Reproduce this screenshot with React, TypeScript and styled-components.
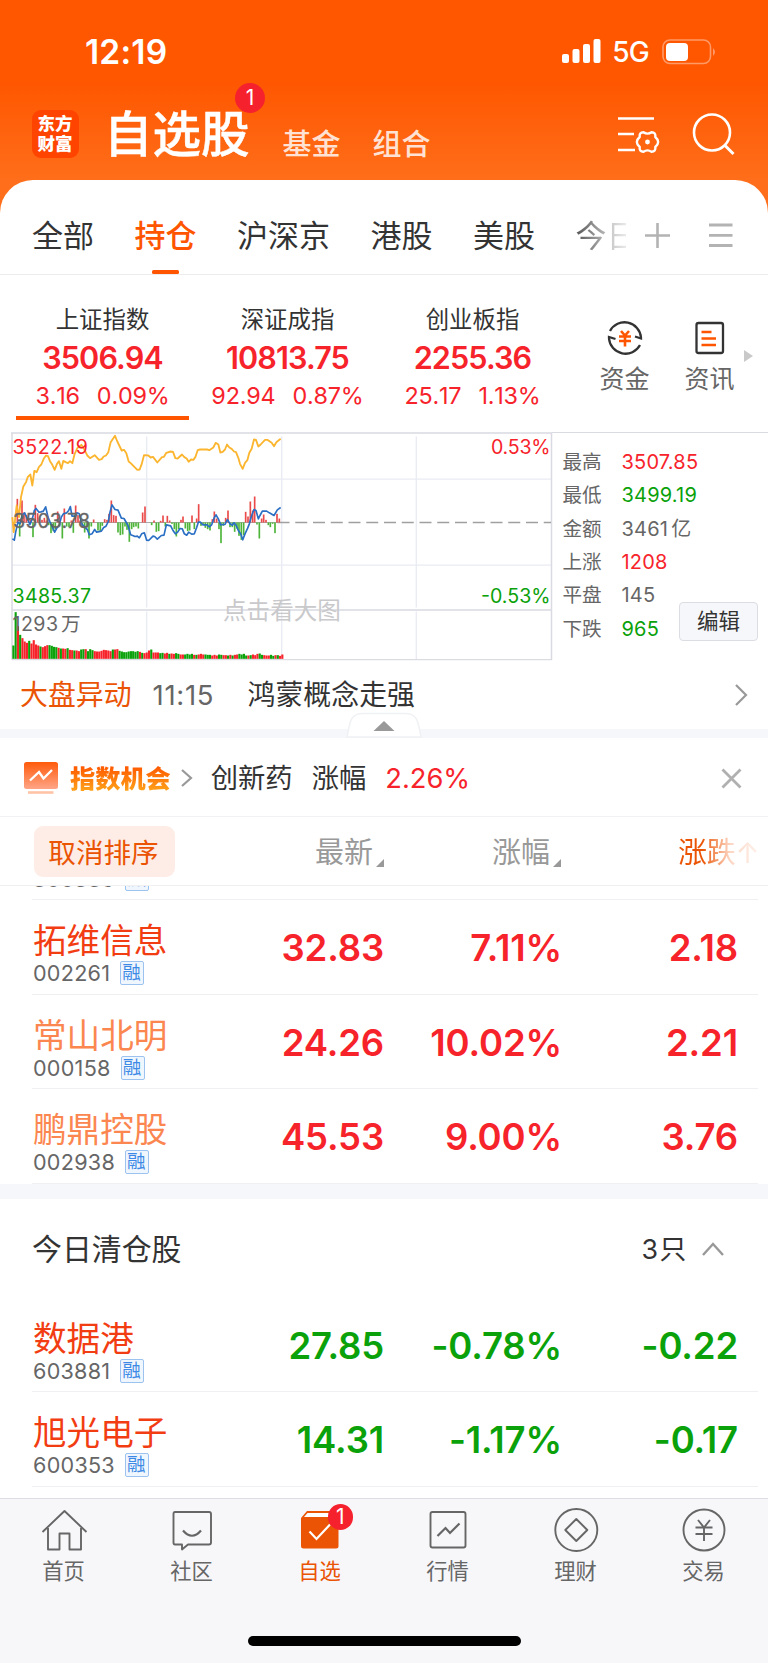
import React from "react";
import styled, { createGlobalStyle, css } from "styled-components";

const RED = "#f7232b";
const GREEN = "#0aa10a";
const ORANGE = "#ff5500";
const DEEP_ORANGE = "#ea5404";

const GlobalStyle = createGlobalStyle`
  * { box-sizing: border-box; }
  body {
    margin: 0;
    background: #fff;
    font-family: Inter, "Noto Sans CJK SC", sans-serif;
    color: #333;
  }
  svg { display: block; flex: none; overflow: visible; }
`;

const Screen = styled.div`
  width: 768px;
  height: 1663px;
  overflow: hidden;
  display: flex;
  flex-direction: column;
  background: linear-gradient(#ff5600 0, #ff5600 80px, #ff6e1a 180px, #ff6e1a 240px);
`;

/* ---------- status bar ---------- */
const StatusBar = styled.div`
  height: 86px;
  flex: none;
  display: flex;
  align-items: center;
  padding: 17px 51px 0 85px;
  color: #fff;
`;
const Clock = styled.div`
  flex: 1;
  font-size: 33.5px;
  font-weight: 600;
  line-height: 40px;
  letter-spacing: 0.2px;
`;
const Network = styled.div`
  font-size: 28px;
  font-weight: 500;
  line-height: 40px;
  letter-spacing: -0.8px;
  margin: 1px 13px 0 11px;
`;

/* ---------- header ---------- */
const Header = styled.div`
  height: 93.5px;
  flex: none;
  display: flex;
  padding-left: 32px;
  color: #fff;
`;
const Logo = styled.div`
  width: 47px;
  height: 48px;
  margin-top: 24px;
  border-radius: 9px;
  background: #ff4400;
  padding: 4px 0 0 5.5px;
  font-size: 17.5px;
  line-height: 19.5px;
  font-weight: 900;
`;
const Title = styled.div`
  position: relative;
  width: 146px;
  margin: 14px 0 0 25px;
  font-size: 48.5px;
  line-height: 70px;
  font-weight: 500;
  -webkit-text-stroke: 0.5px #fff;
`;
const Bubble = styled.span<{ $size: number; $x: number; $y: number }>`
  position: absolute;
  left: ${(p) => p.$x}px;
  top: ${(p) => p.$y}px;
  width: ${(p) => p.$size}px;
  height: ${(p) => p.$size}px;
  border-radius: 50%;
  background: #f5222d;
  color: #fff;
  font-size: 21px;
  line-height: ${(p) => p.$size}px;
  font-weight: 400;
  text-align: center;
  -webkit-text-stroke: 0;
`;
const HeaderLink = styled.div<{ $gap: number }>`
  margin: 38.5px 0 0 ${(p) => p.$gap}px;
  font-size: 29px;
  line-height: 40px;
  color: #ffe2d3;
  font-weight: 500;
`;
const HeaderIcons = styled.div`
  margin-left: auto;
  padding: 24px 33px 0 0;
  display: flex;
  gap: 33px;
`;

/* ---------- sheet ---------- */
const Sheet = styled.div`
  flex: 1;
  display: flex;
  flex-direction: column;
  background: #fff;
  border-radius: 33px 33px 0 0;
`;
const Tabs = styled.div`
  height: 95.5px;
  flex: none;
  display: flex;
  border-bottom: 1px solid #ececee;
`;
const TabList = styled.div`
  width: 626px;
  overflow: hidden;
  display: flex;
  gap: 40.5px;
  padding-left: 32px;
`;
const Tab = styled.div<{ $active?: boolean; $fade?: boolean }>`
  position: relative;
  flex: none;
  padding-top: 35px;
  font-size: 31px;
  line-height: 42px;
  white-space: nowrap;
  ${(p) =>
    p.$active &&
    css`
      color: ${ORANGE};
      font-weight: 500;
      &::after {
        content: "";
        position: absolute;
        left: 17.5px;
        bottom: 0;
        width: 27px;
        height: 4px;
        border-radius: 1.5px;
        background: ${ORANGE};
      }
    `}
  ${(p) =>
    p.$fade &&
    css`
      color: transparent;
      background: linear-gradient(90deg, #555 0, #ccc 36px, #fff 60px);
      background-clip: text;
    `}
`;
const TabTools = styled.div`
  display: flex;
  gap: 39px;
  padding: 43px 0 0 19px;
`;

/* ---------- indices ---------- */
const Indices = styled.div`
  height: 157px;
  flex: none;
  display: flex;
  padding-left: 10px;
`;
const IndexCell = styled.div<{ $active?: boolean }>`
  width: 185px;
  height: 145px;
  padding-top: 27.5px;
  text-align: center;
  color: ${RED};
  background: ${(p) =>
    p.$active ? `linear-gradient(${ORANGE}, ${ORANGE}) 6px 100% / 173px 4.5px no-repeat` : "none"};
`;
const IndexName = styled.div`
  font-size: 23.4px;
  line-height: 34px;
  color: #333;
`;
const IndexValue = styled.div`
  font-size: 30.6px;
  line-height: 42px;
  font-weight: 600;
  letter-spacing: -0.9px;
`;
const IndexChange = styled.div`
  display: flex;
  justify-content: center;
  gap: 17px;
  font-size: 23.4px;
  line-height: 34px;
  font-kerning: none;
  letter-spacing: -0.2px;
`;
const Shortcuts = styled.div`
  display: flex;
  padding: 43.5px 0 0 17px;
`;
const Shortcut = styled.div`
  width: 85px;
  display: flex;
  flex-direction: column;
  align-items: center;
  font-size: 25px;
  line-height: 36px;
  color: #666;
  gap: 4px;
`;
const MoreArrow = styled.div`
  margin: 31px 0 0 -8px;
  height: 12px;
  border-left: 9px solid #c9c9c9;
  border-top: 6px solid transparent;
  border-bottom: 6px solid transparent;
`;

/* ---------- chart ---------- */
const ChartPanel = styled.div`
  height: 229px;
  flex: none;
  display: flex;
  padding-left: 11px;
`;
const Stats = styled.div`
  position: relative;
  flex: 1;
  padding: 12.8px 0 0 10.5px;
  border-top: 1.5px solid #d9dae2;
`;
const Stat = styled.div<{ $color: string }>`
  display: grid;
  grid-template-columns: 59px 1fr;
  font-size: 19.6px;
  line-height: 33.4px;
  color: #666;
  b {
    font-weight: 400;
    color: ${(p) => p.$color};
    font-size: 20px;
    letter-spacing: 0.2px;
  }
  i {
    font-style: normal;
    margin-left: 3px;
  }
`;
const EditButton = styled.div`
  position: absolute;
  right: 10px;
  bottom: 20.5px;
  width: 79px;
  height: 39px;
  border: 1px solid #dcdde3;
  border-radius: 4px;
  background: #f6f7fa;
  text-align: center;
  font-size: 21.5px;
  line-height: 36px;
`;

/* ---------- news and promo ---------- */
const News = styled.div`
  height: 68px;
  flex: none;
  display: flex;
  align-items: center;
  padding: 0 21px 1px 20px;
  font-size: 27.9px;
  line-height: 40px;
  span:nth-child(1) { color: ${DEEP_ORANGE}; }
  span:nth-child(2) { color: #666; margin: 0 32px 0 21px; font-size: 27.5px; width: 63px; letter-spacing: 0.7px; }
  svg { margin-left: auto; }
`;
const Divider = styled.div<{ $h: number }>`
  position: relative;
  height: ${(p) => p.$h}px;
  flex: none;
  background: #f6f7fa;
`;
const Collapse = styled.div`
  position: absolute;
  left: 346px;
  top: -17px;
`;
const Promo = styled.div`
  height: 79px;
  flex: none;
  display: flex;
  align-items: center;
  padding: 2px 27.5px 0 24px;
  border-bottom: 1.5px solid #f1f1f4;
  font-size: 27.3px;
  line-height: 40px;
`;
const PromoTitle = styled.div`
  margin: 1px 10px 0 12px;
  font-size: 25.2px;
  font-weight: 900;
  color: transparent;
  background: linear-gradient(#ff5a00 20%, #ffa21a 80%);
  background-clip: text;
`;
const PromoName = styled.div`
  margin: 2px 0 0 19px;
`;
const PromoRate = styled.div`
  margin: 2px auto 0 19px;
  color: ${RED};
`;

/* ---------- table ---------- */
const SortBar = styled.div`
  height: 69px;
  flex: none;
  display: grid;
  grid-template-columns: 175px 209px 177px 1fr;
  align-items: center;
  border-bottom: 1.5px solid #f0f0f3;
  font-size: 29px;
  line-height: 40px;
  color: #999;
`;
const CancelSort = styled.div`
  margin-left: 34px;
  width: 141px;
  height: 51px;
  border-radius: 9px;
  background: #fdede6;
  color: ${DEEP_ORANGE};
  font-size: 27.6px;
  line-height: 54px;
  padding-right: 2px;
  text-align: center;
`;
const SortKey = styled.div`
  display: flex;
  justify-content: flex-end;
  align-items: flex-end;
  gap: 3px;
  padding-top: 3px;
  svg { margin-bottom: 6px; }
`;
const ActiveSortKey = styled.div`
  margin: 3px 0 0 117px;
  color: transparent;
  background: linear-gradient(90deg, #ea5404 24px, #fdd6c3 52px, #fef0e9 80px);
  background-clip: text;
  white-space: nowrap;
  letter-spacing: -0.3px;
`;
const Row = styled.div`
  height: 94.5px;
  flex: none;
  margin: 0 10px 0 32px;
  padding-top: 9px;
  border-bottom: 1.5px solid #f0f0f2;
  display: grid;
  grid-template-columns: 160px 192px 178px 176px;
`;
const ClippedRow = styled.div`
  height: 14px;
  flex: none;
  overflow: hidden;
  display: flex;
  flex-direction: column;
  justify-content: flex-end;
`;
const StockName = styled.div<{ $color: string }>`
  margin-top: 9px;
  padding-left: 1px;
  height: 46px;
  font-size: 33.6px;
  line-height: 46px;
  color: ${(p) => p.$color};
  white-space: nowrap;
`;
const StockCode = styled.div`
  display: flex;
  align-items: center;
  gap: 10px;
  margin-top: -4px;
  padding-left: 1px;
  font-size: 21.6px;
  line-height: 26px;
  letter-spacing: 0.25px;
  font-kerning: none;
  color: #666;
`;
const MarginTag = styled.span`
  width: 24px;
  height: 24px;
  border: 1.5px solid #9cc3f0;
  border-radius: 2px;
  background: #f0f6fd;
  color: #3d8ae6;
  font-size: 18.5px;
  line-height: 21px;
  text-indent: 1px;
  letter-spacing: 0;
`;
const Num = styled.div<{ $down?: boolean }>`
  text-align: right;
  font-size: 36.5px;
  line-height: 46px;
  padding-top: 16px;
  font-weight: 600;
  letter-spacing: -0.15px;
  color: ${(p) => (p.$down ? GREEN : RED)};
`;
const SectionHead = styled.div`
  height: 99px;
  flex: none;
  display: flex;
  align-items: center;
  padding: 2px 44px 0 32px;
  font-size: 29.9px;
  line-height: 44px;
`;
const Count = styled.div`
  margin: 0 14px 0 auto;
  font-size: 26.8px;
  letter-spacing: 1.6px;
`;

/* ---------- bottom bar ---------- */
const BottomBar = styled.div`
  height: 165px;
  flex: none;
  display: flex;
  flex-direction: column;
  align-items: center;
  margin-top: auto;
  border-top: 1px solid #dedee4;
  background: #f7f7fa;
`;
const BottomTabs = styled.div`
  display: flex;
  width: 100%;
  height: 137px;
`;
const BottomTab = styled.div<{ $active?: boolean }>`
  width: 128px;
  padding: 7px 1px 0 0;
  display: flex;
  flex-direction: column;
  align-items: center;
  font-size: 21.3px;
  line-height: 34px;
  color: ${(p) => (p.$active ? DEEP_ORANGE : "#666")};
`;
const TabIcon = styled.div`
  position: relative;
  width: 48px;
  height: 48px;
`;
const HomeIndicator = styled.div`
  width: 273px;
  height: 10px;
  border-radius: 5px;
  background: #000;
`;

/* ---------- chart data, in thirds of a pixel ---------- */
const AVERAGE =
  "37,275 41,320 50,240 57,275 63,215 70,183 78,170 83,155 91,147 97,180 103,136 110,140 117,124 124,117 131,100 138,90 144,92 150,107 157,118 164,133 171,115 177,107 184,130 190,106 197,110 204,113 210,107 217,113 224,85 232,68 244,58 252,70 262,90 270,98 284,89 297,103 305,101 311,93 318,90 325,80 332,50 345,31 352,48 365,75 372,73 379,83 386,108 392,113 412,133 419,132 425,116 432,89 445,90 452,96 459,94 472,111 486,95 492,94 499,82 512,78 519,79 526,98 533,99 546,87 553,95 560,99 566,109 573,102 580,103 586,95 593,74 600,72 621,72 628,74 640,66 647,52 655,57 661,81 668,79 675,72 681,57 688,66 695,70 702,78 708,80 715,97 720,115 728,130 735,112 742,104 748,82 755,70 762,42 768,43 775,63 782,57 795,43 802,43 815,52 822,62 829,50 842,40";
const PRICE =
  "37,340 43,344 47,320 54,290 60,295 66,270 74,262 82,280 90,297 97,280 103,255 108,249 117,260 123,259 130,257 137,244 144,275 150,290 157,305 164,320 171,307 177,300 184,275 190,265 200,262 206,255 211,243 216,272 224,272 231,262 238,265 245,295 254,305 262,312 268,328 276,325 284,312 290,320 304,317 311,306 318,302 325,288 330,260 336,238 345,252 354,254 364,278 372,279 384,300 392,328 398,330 405,333 412,332 418,337 425,325 433,322 440,344 446,345 459,332 464,333 472,341 484,330 492,329 499,298 512,301 519,315 526,325 533,320 540,309 547,310 553,325 560,329 566,320 575,326 583,325 590,306 595,290 601,290 609,298 621,298 628,304 635,298 642,278 648,268 655,280 662,298 668,297 675,297 682,282 690,295 697,299 702,292 708,299 715,315 722,325 728,343 735,325 743,308 748,295 755,270 762,252 768,255 775,280 780,270 787,257 800,257 808,262 822,270 832,253 842,246";
const MOMENTUM: [number, number][] = [
  [52, -71], [59, 42], [66, -66], [72, -30], [79, -22], [86, -14], [92, -8], [99, 44], [106, -53], [113, -28],
  [119, -15], [126, -8], [133, -14], [139, -6], [146, 8], [153, 32], [160, 26], [166, 20], [173, -33], [180, -12],
  [187, 48], [193, -42], [200, 12], [207, 14], [214, -6], [220, 31], [227, -51], [234, -22], [240, -6], [247, 14],
  [254, 30], [261, 14], [267, 48], [274, 12], [281, -9], [294, 24], [301, 26], [307, 10], [314, -10], [321, -8],
  [327, -26], [334, -66], [341, -22], [348, -20], [354, 30], [361, 38], [368, 36], [375, 12], [381, 22], [388, 58],
  [395, 20], [401, 14], [408, 12], [415, 18], [428, -30], [435, -48], [455, 8], [462, -6], [469, 28], [476, 26],
  [482, -5], [489, -21], [496, 12], [502, -20], [509, -6], [516, 4], [523, 20], [529, 42], [536, 20], [543, -8],
  [549, -18], [556, 18], [563, 26], [569, 24], [576, -21], [583, 20], [590, -12], [596, -55], [603, 10], [610, 4],
  [616, 16], [623, 20], [630, 24], [637, -10], [643, -33], [650, -12], [657, 20], [663, 62], [670, 10], [677, -14],
  [684, -36], [690, 14], [697, 14], [704, 28], [711, 18], [717, 40], [724, 52], [731, 38], [737, -32], [744, -18],
  [751, -63], [758, -36], [764, -78], [771, 6], [778, 48], [785, -12], [791, -24], [798, -8], [805, 8], [811, 14],
  [818, 4], [825, 32], [831, -26], [838, -12],
];
const VOLUME =
  "40g 140g 98r 72g 62r 52r 48r 54g 46r 56r 43r 40r 37g 35r 38r 41r 41g 39g 36g 35g 33r 31g 31r 30r 32g 27r 26r 25g 25r 23r 28g 29g 29r 23g 29g 26g 23r 22r 22r 24r 27r 26r 25r 23r 28g 28r 29r 24g 22g 20g 20g 22g 23g 23g 21g 23g 21r 18g 17r 19r 25r 28g 19r 19r 19r 17g 18g 16r 18r 15g 16r 15r 17g 15g 13r 13r 13g 15g 13g 15g 12r 12g 13r 15r 13r 13g 12g 12g 10r 12r 10r 13g 12g 11r 11r 10g 12r 10g 12r 13r 15g 13g 15g 10g 10r 11g 13r 11r 15r 16g 12g 11r 10r 10r 12g 9g 11r 11g 9r 13r"
    .split(" ")
    .map((s) => ({ h: parseInt(s, 10), up: s.endsWith("r") }));

function Chart() {
  return (
    <svg width="541" height="229" viewBox="11 6.5 541 229" fill="none" fontSize="19.6">
      <g stroke="#e9ebf3" strokeWidth="1.3">
        <path d="M146.7 11V182M146.7 186V234M281.7 11V182M281.7 186V234M416.3 11V182M416.3 186V234M12 53.7H551.5M12 139.7H551.5" />
      </g>
      <path d="M11 7.6H552M12 7V234.2M551.5 7V234.2M12 184.4H551.5" stroke="#d9dae2" strokeWidth="1.5" />
      <path d="M12 234.2H552" stroke="#d3d4dc" />
      <path d="M12 97H281" stroke="#aaa" strokeWidth="1" />
      <path d="M277.5 97H551" stroke="#a0a0a0" strokeWidth="1.6" strokeDasharray="12 5.75" />
      <g transform="scale(0.33333)">
        {MOMENTUM.map(([x, h]) => (
          <rect key={x} x={x - 2.5} y={h < 0 ? 291 + h : 291} width="5" height={Math.abs(h)} fill={h < 0 ? "#ea4a4a" : "#4eb53a"} />
        ))}
        {VOLUME.map((v, i) => (
          <rect key={i} x={37 + i * 6.78} y={700 - v.h} width="6.4" height={v.h} fill={v.up ? "#f7232b" : "#0aa10a"} />
        ))}
        <polyline points={AVERAGE} stroke="#fbb52e" strokeWidth="5.5" strokeLinejoin="round" />
        <polyline points={PRICE} stroke="#2a6fc4" strokeWidth="5" strokeLinejoin="round" />
      </g>
      <text x="12.5" y="28" fill={RED} textLength="75.5">3522.19</text>
      <text x="13" y="102.5" fill="#666" textLength="77" stroke="#666" strokeWidth="0.3">3503.78</text>
      <text x="12.5" y="177.2" fill={GREEN} textLength="78.5">3485.37</text>
      <text x="12.5" y="205.5" fill="#666" textLength="45.5">1293</text>
      <text x="61" y="205.5" fill="#666">万</text>
      <text x="491" y="28" fill={RED} textLength="59.5">0.53%</text>
      <text x="481" y="177.2" fill={GREEN} textLength="69.5">-0.53%</text>
      <text x="223" y="193" fill="#c9c9cc" fontSize="23.6">点击看大图</text>
    </svg>
  );
}

function Chevron({ w, h, sw = 2.2, color = "#999" }: { w: number; h: number; sw?: number; color?: string }) {
  return (
    <svg width={w} height={h} fill="none" stroke={color} strokeWidth={sw}>
      <path d={`M1 1L${w - 1} ${h / 2}L1 ${h - 1}`} />
    </svg>
  );
}

const indices = [
  ["上证指数", "3506.94", "3.16", "0.09%"],
  ["深证成指", "10813.75", "92.94", "0.87%"],
  ["创业板指", "2255.36", "25.17", "1.13%"],
];
const stats = [
  { label: "最高", value: "3507.85", color: RED },
  { label: "最低", value: "3499.19", color: GREEN },
  { label: "金额", value: "3461", unit: "亿", color: "#666" },
  { label: "上涨", value: "1208", color: RED },
  { label: "平盘", value: "145", color: "#666" },
  { label: "下跌", value: "965", color: GREEN },
];

function Stock({ name, code, nums, color = "#f23c12", down }: { name?: string; code: string; nums: string[]; color?: string; down?: boolean }) {
  return (
    <Row>
      <div>
        <StockName $color={color}>{name}</StockName>
        <StockCode>
          {code}
          <MarginTag>融</MarginTag>
        </StockCode>
      </div>
      {nums.map((n, i) => (
        <Num key={i} $down={down}>{n}</Num>
      ))}
    </Row>
  );
}

const SortMark = () => (
  <svg width="8" height="8" fill="#999"><path d="M8 0V8H0Z" /></svg>
);

export default function App() {
  return (
    <>
      <GlobalStyle />
      <Screen>
        <StatusBar>
          <Clock>12:19</Clock>
          <svg width="39" height="25" fill="#fff">
            <rect x="0" y="15" width="7" height="9" rx="2" />
            <rect x="10.5" y="10" width="7" height="14" rx="2" />
            <rect x="21" y="5" width="7" height="19" rx="2" />
            <rect x="31.5" y="0" width="7" height="24" rx="2" />
          </svg>
          <Network>5G</Network>
          <svg width="55" height="26" fill="none">
            <rect x="1" y="1" width="47.5" height="23.5" rx="7" stroke="#ff9a66" strokeWidth="1.6" />
            <rect x="4" y="4" width="22" height="18" rx="4" fill="#fff" />
            <path d="M51 9Q55 13 51 17Z" fill="#ff9a66" />
          </svg>
        </StatusBar>

        <Header>
          <Logo>东方<br />财富</Logo>
          <Title>
            自选股
            <Bubble $size={30} $x={131} $y={-17}>1</Bubble>
          </Title>
          <HeaderLink $gap={32.5}>基金</HeaderLink>
          <HeaderLink $gap={32}>组合</HeaderLink>
          <HeaderIcons>
            <svg width="42" height="44" fill="none" stroke="#fff" strokeWidth="2.6">
              <path d="M0 8.5H36M0 24H16M0 40H17" />
              <path
                d="M25.5 22.2Q29.5 25 33.5 22.2Q38 22.2 37.3 27Q43 32 37.3 37Q38 41.8 33.5 41.8Q29.5 39 25.5 41.8Q21 41.8 21.7 37Q16 32 21.7 27Q21 22.2 25.5 22.2Z"
                strokeWidth="2.4"
                strokeLinejoin="round"
              />
              <circle cx="29.5" cy="32" r="2.4" fill="#fff" stroke="none" />
            </svg>
            <svg width="42" height="44" fill="none" stroke="#fff" strokeWidth="2.6">
              <circle cx="19" cy="22.5" r="18" />
              <path d="M31.5 35L40.5 44" strokeWidth="3" />
            </svg>
          </HeaderIcons>
        </Header>

        <Sheet>
          <Tabs>
            <TabList>
              <Tab>全部</Tab>
              <Tab $active>持仓</Tab>
              <Tab>沪深京</Tab>
              <Tab>港股</Tab>
              <Tab>美股</Tab>
              <Tab $fade>今日</Tab>
            </TabList>
            <TabTools>
              <svg width="25" height="25" stroke="#b3b3b3" strokeWidth="2.6">
                <path d="M12.5 0V25M0 12.5H25" />
              </svg>
              <svg width="24" height="25" stroke="#b3b3b3" strokeWidth="2.8">
                <path d="M0 2H23.5M0 12.3H23.5M0 22.5H23.5" />
              </svg>
            </TabTools>
          </Tabs>

          <Indices>
            {indices.map(([name, value, change, rate], i) => (
              <IndexCell key={name} $active={i === 0}>
                <IndexName>{name}</IndexName>
                <IndexValue>{value}</IndexValue>
                <IndexChange><span>{change}</span><span>{rate}</span></IndexChange>
              </IndexCell>
            ))}
            <Shortcuts>
              <Shortcut>
                <svg width="38" height="38" fill="none" stroke="#333" strokeWidth="2.3">
                  <path d="M4 12A16.5 16.5 0 0 1 35 18.5V19.5L29 17.5M34 26A16.5 16.5 0 0 1 3 19.5V18L9.5 20" />
                  <path d="M15 12L19 16.5L23 12M13 17.5H25M13 22H25M19 16.5V27.5" stroke={ORANGE} strokeWidth="2.6" />
                </svg>
                资金
              </Shortcut>
              <Shortcut>
                <svg width="38" height="38" fill="none" stroke="#333" strokeWidth="2.3">
                  <rect x="5.5" y="4" width="26.5" height="30" rx="2" />
                  <path d="M10.5 13H20.5M10.5 19.5H25M10.5 26H25" stroke={ORANGE} strokeWidth="2.6" />
                </svg>
                资讯
              </Shortcut>
              <MoreArrow />
            </Shortcuts>
          </Indices>

          <ChartPanel>
            <Chart />
            <Stats>
              {stats.map((s) => (
                <Stat key={s.label} $color={s.color}>
                  <span>{s.label}</span>
                  <b>{s.value}{s.unit && <i>{s.unit}</i>}</b>
                </Stat>
              ))}
              <EditButton>编辑</EditButton>
            </Stats>
          </ChartPanel>

          <News>
            <span>大盘异动</span>
            <span>11:15</span>
            <span>鸿蒙概念走强</span>
            <Chevron w={12} h={22} />
          </News>
          <Divider $h={9}>
            <Collapse>
              <svg width="76" height="26">
                <path d="M1 25C4 12 3 1.5 17 1.5H59C73 1.5 72 12 75 25Z" fill="#fff" stroke="#f0f1f4" strokeWidth="1.5" />
                <path d="M38 9L48.5 19H27.5Z" fill="#999" />
              </svg>
            </Collapse>
          </Divider>

          <Promo>
            <svg width="34" height="33" fill="none">
              <defs>
                <linearGradient id="board" x1="0" y1="0" x2="0" y2="1">
                  <stop offset="0" stopColor="#ff5a0a" />
                  <stop offset="1" stopColor="#ffa587" />
                </linearGradient>
              </defs>
              <rect width="34" height="27" rx="2.5" fill="url(#board)" />
              <path d="M6 18.5L15 10L19.5 16.5L28 8" stroke="#fff" strokeWidth="2.4" />
              <path d="M4 30.5H29.5" stroke="#ffc3a6" strokeWidth="2.6" />
            </svg>
            <PromoTitle>指数机会</PromoTitle>
            <Chevron w={11} h={18} />
            <PromoName>创新药</PromoName>
            <PromoName>涨幅</PromoName>
            <PromoRate>2.26%</PromoRate>
            <svg width="19" height="19" stroke="#b0b0b0" strokeWidth="2.8">
              <path d="M0.5 0.5L18.5 18.5M18.5 0.5L0.5 18.5" />
            </svg>
          </Promo>

          <SortBar>
            <CancelSort>取消排序</CancelSort>
            <SortKey>最新<SortMark /></SortKey>
            <SortKey>涨幅<SortMark /></SortKey>
            <ActiveSortKey>涨跌↑</ActiveSortKey>
          </SortBar>

          <ClippedRow>
            <Stock code="300339" nums={[]} />
          </ClippedRow>
          <Stock name="拓维信息" code="002261" nums={["32.83", "7.11%", "2.18"]} />
          <Stock name="常山北明" code="000158" nums={["24.26", "10.02%", "2.21"]} color="#fb8650" />
          <Stock name="鹏鼎控股" code="002938" nums={["45.53", "9.00%", "3.76"]} color="#fb8650" />
          <Divider $h={15} />
          <SectionHead>
            今日清仓股
            <Count>3只</Count>
            <svg width="22" height="14" fill="none" stroke="#999" strokeWidth="2.4">
              <path d="M1 13L11 2L21 13" />
            </svg>
          </SectionHead>
          <Stock name="数据港" code="603881" nums={["27.85", "-0.78%", "-0.22"]} down />
          <Stock name="旭光电子" code="600353" nums={["14.31", "-1.17%", "-0.17"]} down />

          <BottomBar>
            <BottomTabs>
              <BottomTab>
                <TabIcon>
                  <svg width="48" height="48" fill="none" stroke="#666" strokeWidth="1.9" strokeLinejoin="round">
                    <path d="M2.5 26L24.5 5L46.5 26" />
                    <path d="M8 22V43.5H19.5V27.5H29.5V43.5H41V22" />
                  </svg>
                </TabIcon>
                首页
              </BottomTab>
              <BottomTab>
                <TabIcon>
                  <svg width="48" height="48" fill="none" stroke="#666" strokeWidth="1.9" strokeLinejoin="round">
                    <path d="M7 6H41Q43 6 43 8V36.5Q43 38.5 41 38.5H20L14 43.5V38.5H7Q5.5 38.5 5.5 36.5V8Q5.5 6 7 6Z" />
                    <path d="M15 24.5Q24 35 33 24.5" strokeWidth="2.2" />
                  </svg>
                </TabIcon>
                社区
              </BottomTab>
              <BottomTab $active>
                <TabIcon>
                  <svg width="48" height="48" fill="none">
                    <path d="M11 5H42.5V40Q42.5 42.5 40 42.5H7.5Q5 42.5 5 40V12Z" fill={DEEP_ORANGE} />
                    <path d="M11.5 7H38V11H8Z" fill="#fff" />
                    <path d="M13.5 25.5L20.5 33L34 18.5" stroke="#fff" strokeWidth="2.2" />
                  </svg>
                  <Bubble $size={25.5} $x={32} $y={-2}>1</Bubble>
                </TabIcon>
                自选
              </BottomTab>
              <BottomTab>
                <TabIcon>
                  <svg width="48" height="48" fill="none" stroke="#666" strokeWidth="1.9">
                    <rect x="6.5" y="6" width="35" height="35.5" rx="2" />
                    <path d="M13.5 30L21.5 22L26 27L35.5 17.5" strokeWidth="2.2" />
                  </svg>
                </TabIcon>
                行情
              </BottomTab>
              <BottomTab>
                <TabIcon>
                  <svg width="48" height="48" fill="none" stroke="#666" strokeWidth="1.9">
                    <circle cx="24.3" cy="24" r="21" />
                    <path d="M24.3 13L35.3 24L24.3 35L13.3 24Z" strokeLinejoin="round" />
                  </svg>
                </TabIcon>
                理财
              </BottomTab>
              <BottomTab>
                <TabIcon>
                  <svg width="48" height="48" fill="none" stroke="#666" strokeWidth="1.9">
                    <circle cx="24" cy="24" r="20.5" />
                    <path d="M18 14L24 21.5L30 14M15.5 21.5H32.5M15.5 28H32.5M24 21.5V35" />
                  </svg>
                </TabIcon>
                交易
              </BottomTab>
            </BottomTabs>
            <HomeIndicator />
          </BottomBar>
        </Sheet>
      </Screen>
    </>
  );
}
